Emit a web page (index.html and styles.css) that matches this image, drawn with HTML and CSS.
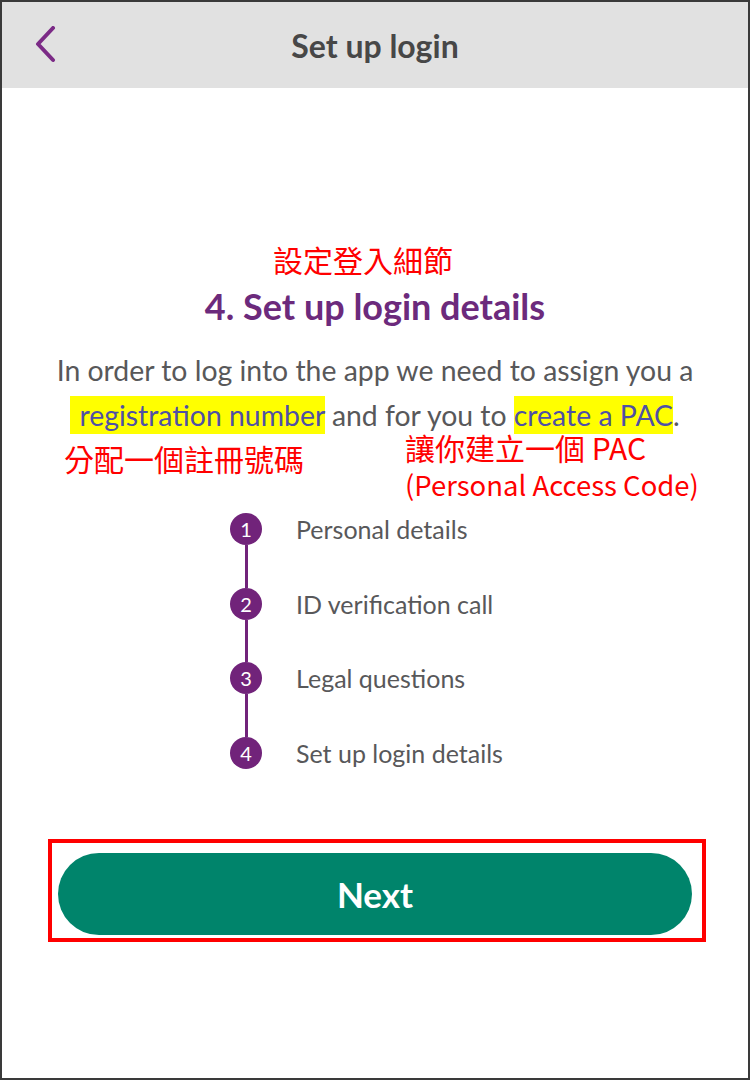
FILE: index.html
```html
<!DOCTYPE html>
<html lang="en">
<head>
  <meta charset="UTF-8">
  <meta name="viewport" content="width=device-width, initial-scale=1.0">
  <title>Set up login</title>
  <link rel="stylesheet" href="styles.css">
</head>
<body>

<div class="screen">

  <!-- Top bar -->
  <div class="topbar">
    <a href="#" class="back" aria-label="Back">
      <svg width="22" height="38" viewBox="0 0 22 38">
        <path d="M18 2 L3 18 L18 34" fill="none" stroke="#7b2a86" stroke-width="4" stroke-linecap="round" stroke-linejoin="round"/>
      </svg>
    </a>
    <h1>Set up login</h1>
    <span></span>
  </div>

  <!-- Step intro -->
  <div class="content">
    <p class="note note-title">設定登入細節</p>
    <h2>4. Set up login details</h2>
    <p class="intro">
      In order to log into the app we need to assign you a<br>
      <span class="mark first">&nbsp;registration number</span> and for you to <span class="mark">create a PAC</span>.
    </p>

    <div class="note-row">
      <p class="note note-left">分配一個註冊號碼</p>
      <div class="note note-right">
        <p>讓你建立一個 PAC</p>
        <p class="latin">(Personal Access Code)</p>
      </div>
    </div>

    <!-- Progress -->
    <ol class="steps">
      <li class="step">
        <div class="rail"><span class="dot">1</span><span class="line"></span></div>
        <span class="label">Personal details</span>
      </li>
      <li class="step">
        <div class="rail"><span class="dot">2</span><span class="line"></span></div>
        <span class="label">ID verification call</span>
      </li>
      <li class="step">
        <div class="rail"><span class="dot">3</span><span class="line"></span></div>
        <span class="label">Legal questions</span>
      </li>
      <li class="step last">
        <div class="rail"><span class="dot">4</span></div>
        <span class="label">Set up login details</span>
      </li>
    </ol>

    <div class="next-box">
      <button class="btn-next">Next</button>
    </div>
  </div>

</div>

</body>
</html>
```

FILE: styles.css
```css
body {
  margin: 0;
  font-family: Lato, "Open Sans", sans-serif;
  background-color: #fff;
}

.screen {
  width: 750px;
  height: 1080px;
  box-sizing: border-box;
  border: 2px solid #3a3a3a;
  background-color: #fff;
  overflow: hidden;
}

/* Top bar */
.topbar {
  height: 86px;
  background-color: #e1e1e1;
  display: grid;
  grid-template-columns: 1fr auto 1fr;
  align-items: center;
}

.topbar .back {
  display: flex;
  margin-left: 33px;
}

.topbar h1 {
  margin: 0;
  font-size: 32px;
  font-weight: 700;
  color: #474747;
}

/* Content */
.content {
  padding-top: 153px;
}

p {
  margin: 0;
}

.note {
  color: #ff0000;
  font-family: "Noto Sans CJK TC", "Noto Sans", sans-serif;
  font-size: 30px;
  line-height: 37px;
}

.note-title {
  text-align: center;
  padding-right: 24px;
}

h2 {
  margin: 8px 0 0;
  font-size: 36px;
  line-height: 40px;
  font-weight: 700;
  color: #6c2a7c;
  text-align: center;
}

.intro {
  margin-top: 22px;
  font-size: 28.4px;
  line-height: 45px;
  color: #58585a;
  text-align: center;
}

.mark {
  background-color: #ffff00;
  color: #4f50a6;
  padding: 2px 0;
}

.mark.first {
  padding-left: 2px;
}

.note-row {
  display: flex;
  align-items: flex-start;
  margin-top: -9px;
  padding-left: 62px;
}

.note-left {
  margin-top: 11px;
  width: 341px;
}

.note-right .latin {
  font-size: 27.5px;
}

/* Progress steps */
.steps {
  list-style: none;
  margin: 10px 0 0;
  padding: 0 0 0 228px;
}

.step {
  display: flex;
  height: 74.5px;
}

.step.last {
  height: 32px;
}

.rail {
  width: 32px;
  display: flex;
  flex-direction: column;
  align-items: center;
}

.dot {
  width: 32px;
  height: 32px;
  border-radius: 50%;
  background-color: #71237a;
  color: #fff;
  font-size: 20px;
  line-height: 32px;
  text-align: center;
  flex-shrink: 0;
}

.line {
  flex: 1;
  width: 3px;
  background-color: #71237a;
}

.label {
  margin-left: 34px;
  font-size: 25px;
  line-height: 32px;
  color: #58585a;
}

/* Next button */
.next-box {
  margin: 70px 0 0 46px;
  width: 658px;
  box-sizing: border-box;
  border: 4px solid #ff0000;
  padding: 10px 10px 3px 6px;
}

.btn-next {
  display: block;
  width: 100%;
  height: 82px;
  border: none;
  border-radius: 41px;
  background-color: #00846b;
  color: #fff;
  font-family: Lato, sans-serif;
  font-size: 35px;
  font-weight: 700;
  cursor: pointer;
}
```
